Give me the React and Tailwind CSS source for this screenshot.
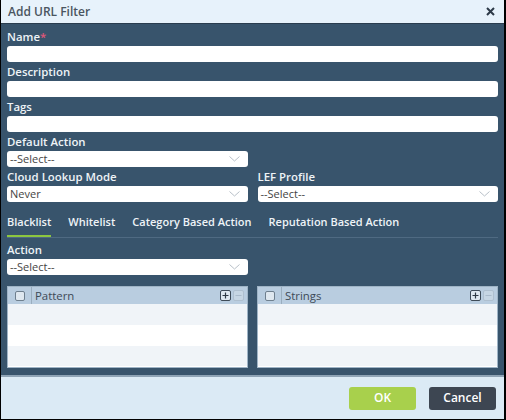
import React from "react";

/**
 * Add URL Filter dialog
 * - light header with title + close
 * - slate body with form fields, tabs and two grid tables
 * - footer with OK / Cancel
 */

const font = { fontFamily: '"Open Sans", "Noto Sans", sans-serif' };

export default function App() {
  return (
    <div
      className="flex h-[420px] w-[506px] flex-col overflow-hidden border-x border-b border-r-2 border-black bg-[#38546c]"
      style={font}
    >
      <div className="flex h-[24px] shrink-0 items-center justify-between border-b border-[#2a3d4f] bg-[#e7f2fb] pl-[7px] pr-[9px]">
        <span className="text-[12px] font-semibold text-[#4a5560]">Add URL Filter</span>
        <CloseIcon />
      </div>

      <div className="flex flex-1 flex-col px-[6px] pt-[6px]">
        <Label>
          Name<span className="text-[#e0577a]">*</span>
        </Label>
        <TextBox />
        <Label className="mt-[3px]">Description</Label>
        <TextBox />
        <Label className="mt-[3px]">Tags</Label>
        <TextBox />

        <div className="mt-[3px] grid grid-cols-2 gap-x-[10px]">
          <div>
            <Label>Default Action</Label>
            <Select value="--Select--" />
          </div>
          <div />
          <div className="mt-[3px]">
            <Label>Cloud Lookup Mode</Label>
            <Select value="Never" />
          </div>
          <div className="mt-[3px]">
            <Label>LEF Profile</Label>
            <Select value="--Select--" />
          </div>
        </div>

        <div className="mt-[13px] flex border-b border-[#4f6a82] text-[11px] font-semibold text-[#eef3f7]">
          <Tab active>Blacklist</Tab>
          <Tab>Whitelist</Tab>
          <Tab>Category Based Action</Tab>
          <Tab>Reputation Based Action</Tab>
        </div>

        <div className="mt-[5px] grid grid-cols-2 gap-x-[10px]">
          <div>
            <Label>Action</Label>
            <Select value="--Select--" />
          </div>
        </div>

        <div className="mt-[11px] grid grid-cols-2 gap-x-[9px]">
          <Grid title="Pattern" />
          <Grid title="Strings" />
        </div>
      </div>

      <div className="flex h-[44px] shrink-0 items-center justify-end gap-[13px] border-t-2 border-[#8ea3b5] bg-[#dbeaf5] pr-[8px]">
        <button className="h-[23px] w-[67px] rounded-[3px] bg-[#a8d04c] text-[12px] font-semibold text-white">
          OK
        </button>
        <button className="h-[23px] w-[67px] rounded-[3px] bg-[#3d4652] text-[12px] font-semibold text-white">
          Cancel
        </button>
      </div>
    </div>
  );
}

function Label({ children, className = "" }) {
  return (
    <div className={"h-[14px] text-[11.4px] leading-[14px] font-semibold text-[#eef3f7] " + className}>
      {children}
    </div>
  );
}

function TextBox() {
  return <div className="mt-[2px] h-[16px] w-full rounded-[3px] bg-white" />;
}

function Select({ value }) {
  return (
    <div className="mt-[2px] flex h-[16px] items-center justify-between rounded-[3px] bg-white pl-[3px] pr-[8px] text-[11px] text-[#444]">
      <span>{value}</span>
      <svg width="11" height="6" viewBox="0 0 11 6" fill="none" stroke="#b8c0c8" strokeWidth="1">
        <path d="M0.5 0.5 L5.5 5 L10.5 0.5" />
      </svg>
    </div>
  );
}

function Tab({ children, active }) {
  return (
    <div className="mr-[17px] flex flex-col">
      <span className="pb-[6px] leading-[14px]">{children}</span>
      <span className={"h-[2px] " + (active ? "bg-[#8cc63f]" : "bg-transparent")} />
    </div>
  );
}

function Grid({ title }) {
  return (
    <div className="h-[82px] overflow-hidden border border-[#9fb4c6] bg-white">
      <div className="flex h-[17px] items-center bg-[#b9cde0] text-[11.4px] text-[#3d4a57]">
        <div className="flex h-full w-[24px] items-center justify-center border-r border-[#9aaebf]">
          <span className="block h-[10px] w-[10px] rounded-[2px] border border-[#6f808f] bg-[#dfe8f0]" />
        </div>
        <span className="flex-1 pl-[3px]">{title}</span>
        <div className="flex gap-[2px] pr-[3px]">
          <span className="flex h-[11px] w-[11px] items-center justify-center rounded-[2px] border border-[#3e4b58] bg-[#dfe8f0]">
            <svg width="7" height="7" viewBox="0 0 7 7" stroke="#2f3a46" strokeWidth="1.2">
              <path d="M3.5 0.5 V6.5 M0.5 3.5 H6.5" />
            </svg>
          </span>
          <span className="flex h-[11px] w-[11px] items-center justify-center rounded-[2px] border border-[#aebfcf] bg-[#c6d6e4]">
            <svg width="7" height="7" viewBox="0 0 7 7" stroke="#a9bacb" strokeWidth="1">
              <path d="M0.5 3.5 H6.5" />
            </svg>
          </span>
        </div>
      </div>
      <div className="h-[21px] bg-[#f0f4f8]" />
      <div className="h-[21px] bg-white" />
      <div className="h-[20px] bg-[#f0f4f8]" />
    </div>
  );
}

function CloseIcon() {
  return (
    <svg width="9" height="9" viewBox="0 0 9 9" stroke="#2d3a48" strokeWidth="2">
      <path d="M1 1 L8 8 M8 1 L1 8" />
    </svg>
  );
}
